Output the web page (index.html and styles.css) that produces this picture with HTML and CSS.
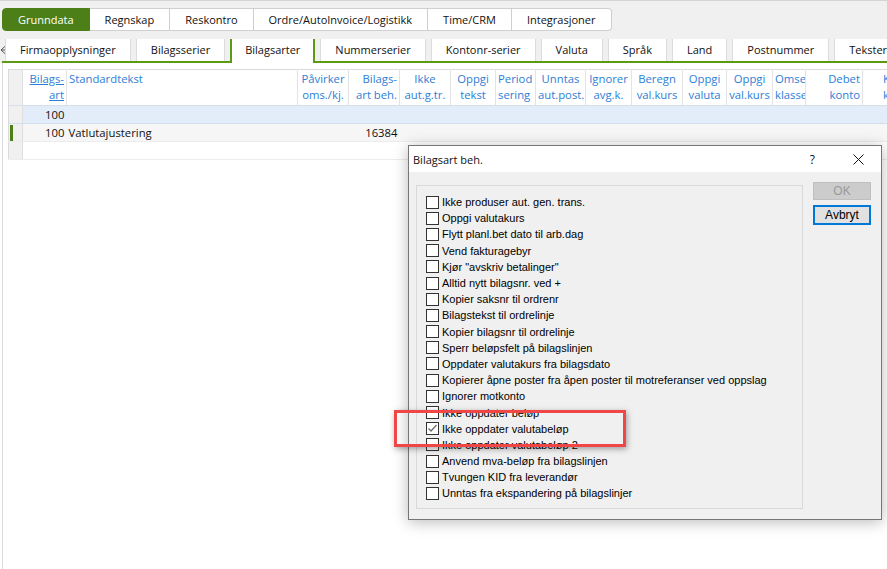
FILE: index.html
```html
<!DOCTYPE html>
<html lang="no">
<head>
    <meta charset="UTF-8">
    <title>Bilagsarter</title>
    <link rel="stylesheet" href="styles.css">
</head>
<body>
    <div class="top">
        <div class="main-tabs">
            <div class="main-tab active">Grunndata</div>
            <div class="main-tab">Regnskap</div>
            <div class="main-tab">Reskontro</div>
            <div class="main-tab">Ordre/AutoInvoice/Logistikk</div>
            <div class="main-tab">Time/CRM</div>
            <div class="main-tab">Integrasjoner</div>
        </div>
        <div class="sub-tabs">
            <svg class="nav-arrow" width="6" height="12" viewBox="0 0 6 12">
                <path d="M6 1.5 L1 6 L6 10.5 M1 6 L6 6" fill="none" stroke="#555" stroke-width="1"/>
            </svg>
            <div class="sub-tab">Firmaopplysninger</div>
            <div class="sub-tab">Bilagsserier</div>
            <div class="sub-tab active">Bilagsarter</div>
            <div class="sub-tab">Nummerserier</div>
            <div class="sub-tab">Kontonr-serier</div>
            <div class="sub-tab">Valuta</div>
            <div class="sub-tab">Språk</div>
            <div class="sub-tab">Land</div>
            <div class="sub-tab">Postnummer</div>
            <div class="sub-tab">Tekster</div>
        </div>
    </div>

    <div class="content">
        <table class="grid">
            <colgroup>
                <col style="width:14px"><col style="width:44px"><col style="width:231px">
                <col style="width:51px"><col style="width:51px"><col style="width:51px">
                <col style="width:45px"><col style="width:40px"><col style="width:50px">
                <col style="width:46px"><col style="width:51px"><col style="width:44px">
                <col style="width:46px"><col style="width:33px"><col style="width:57px">
                <col style="width:60px">
            </colgroup>
            <thead>
                <tr>
                    <th class="ind"></th>
                    <th class="right"><u>Bilags-</u><br><u>art</u></th>
                    <th class="left">Standardtekst</th>
                    <th>Påvirker<br>oms./kj.</th>
                    <th class="right">Bilags-<br>art beh.</th>
                    <th>Ikke<br>aut.g.tr.</th>
                    <th>Oppgi<br>tekst</th>
                    <th class="left">Period<br>sering</th>
                    <th>Unntas<br>aut.post.</th>
                    <th>Ignorer<br>avg.k.</th>
                    <th>Beregn<br>val.kurs</th>
                    <th>Oppgi<br>valuta</th>
                    <th>Oppgi<br>val.kurs</th>
                    <th class="left">Omsetning<br>klasse</th>
                    <th class="right">Debet<br>konto</th>
                    <th class="left">Kredit<br>konto</th>
                </tr>
            </thead>
            <tbody>
                <tr class="new-row">
                    <td class="ind"></td>
                    <td class="right">100</td>
                    <td></td><td></td><td></td><td></td><td></td><td></td>
                    <td></td><td></td><td></td><td></td><td></td><td></td><td></td><td></td>
                </tr>
                <tr class="current-row">
                    <td class="ind"><span class="marker"></span></td>
                    <td class="right">100</td>
                    <td>Vatlutajustering</td>
                    <td></td>
                    <td class="right">16384</td>
                    <td></td><td></td><td></td><td></td><td></td><td></td><td></td><td></td><td></td><td></td><td></td>
                </tr>
                <tr class="empty-row">
                    <td class="ind"></td>
                    <td></td><td></td><td></td><td></td><td></td><td></td><td></td>
                    <td></td><td></td><td></td><td></td><td></td><td></td><td></td><td></td>
                </tr>
            </tbody>
        </table>
    </div>

    <div class="dialog">
        <div class="title-bar">
            <span class="title">Bilagsart beh.</span>
            <span class="help">?</span>
            <svg class="close" width="11" height="11" viewBox="0 0 11 11">
                <path d="M0.5 0.5 L10.5 10.5 M10.5 0.5 L0.5 10.5" stroke="#111" stroke-width="1"/>
            </svg>
        </div>
        <div class="dialog-body">
            <div class="group">
                <label class="check"><span class="box"></span>Ikke produser aut. gen. trans.</label>
                <label class="check"><span class="box"></span>Oppgi valutakurs</label>
                <label class="check"><span class="box"></span>Flytt planl.bet dato til arb.dag</label>
                <label class="check"><span class="box"></span>Vend fakturagebyr</label>
                <label class="check"><span class="box"></span>Kjør "avskriv betalinger"</label>
                <label class="check"><span class="box"></span>Alltid nytt bilagsnr. ved +</label>
                <label class="check"><span class="box"></span>Kopier saksnr til ordrenr</label>
                <label class="check"><span class="box"></span>Bilagstekst til ordrelinje</label>
                <label class="check"><span class="box"></span>Kopier bilagsnr til ordrelinje</label>
                <label class="check"><span class="box"></span>Sperr beløpsfelt på bilagslinjen</label>
                <label class="check"><span class="box"></span>Oppdater valutakurs fra bilagsdato</label>
                <label class="check"><span class="box"></span>Kopierer åpne poster fra åpen poster til motreferanser ved oppslag</label>
                <label class="check"><span class="box"></span>Ignorer motkonto</label>
                <label class="check"><span class="box"></span>Ikke oppdater beløp</label>
                <label class="check"><span class="box checked">
                    <svg width="11" height="11" viewBox="0 0 11 11">
                        <path d="M1.5 5.5 L4 8 L9.5 2" fill="none" stroke="#6b6b6b" stroke-width="1.3"/>
                    </svg>
                </span>Ikke oppdater valutabeløp</label>
                <label class="check"><span class="box"></span>Ikke oppdater valutabeløp 2</label>
                <label class="check"><span class="box"></span>Anvend mva-beløp fra bilagslinjen</label>
                <label class="check"><span class="box"></span>Tvungen KID fra leverandør</label>
                <label class="check"><span class="box"></span>Unntas fra ekspandering på bilagslinjer</label>
            </div>
            <div class="buttons">
                <button type="button" class="ok-btn" disabled>OK</button>
                <button type="button" class="cancel-btn">Avbryt</button>
            </div>
        </div>
    </div>

    <div class="highlight"></div>
</body>
</html>
```

FILE: styles.css
```css
body {
    margin: 0;
    background: #fff;
    font-family: "Open Sans", "Noto Sans", sans-serif;
    font-size: 11.3px;
    color: #111;
    overflow: hidden;
    position: relative;
    height: 569px;
}
.top {
    background: #f0f0f0;
    border-top: 1px solid #d4d4d4;
    padding-top: 7px;
}
.main-tabs {
    display: flex;
    padding-left: 2px;
    font-size: 11px;
}
.main-tab {
    height: 21px;
    line-height: 21px;
    padding: 0 15px;
    background: #fff;
    border: 1px solid #cfcfcf;
    border-left: none;
    white-space: nowrap;
}
.main-tab:first-child {
    border-left: 1px solid #cfcfcf;
    border-radius: 4px 0 0 4px;
}
.main-tab:last-child {
    border-radius: 0 4px 4px 0;
}
.main-tab.active {
    background: #4d7f19;
    border-color: #4d7f19;
    color: #fff;
}
.sub-tabs {
    display: flex;
    align-items: flex-end;
    gap: 5px;
    margin-top: 8px;
    height: 24px;
    overflow: hidden;
    position: relative;
    font-size: 11px;
}
.sub-tabs::after {
    content: "";
    position: absolute;
    left: 2px;
    right: 0;
    bottom: 0;
    height: 2px;
    background: #5b9a12;
}
.nav-arrow {
    flex-shrink: 0;
    align-self: flex-start;
    margin-top: 5px;
    margin-right: -6px;
}
.sub-tab {
    flex-shrink: 0;
    height: 22px;
    line-height: 22px;
    padding: 0 14px;
    background: #fff;
    border: 1px solid #dcdcdc;
    border-bottom: none;
    white-space: nowrap;
    margin-bottom: 2px;
}
.sub-tab.active {
    height: 24px;
    line-height: 22px;
    margin-bottom: 0;
    border: 2px solid #5b9a12;
    border-bottom: none;
    padding: 0 13px;
    position: relative;
    z-index: 1;
}
.content {
    margin-left: 2px;
    border-left: 1px solid #dcdcdc;
    padding: 6px 0 0 5px;
    height: 500px;
    overflow: hidden;
}
.grid {
    border-collapse: collapse;
    table-layout: fixed;
    width: 914px;
    border: 1px solid #dadada;
}
.grid th {
    height: 34px;
    padding: 1px 2px 0;
    font-weight: normal;
    color: #2d7ed6;
    line-height: 16px;
    vertical-align: top;
    text-align: center;
    white-space: nowrap;
    overflow: hidden;
    border-right: 1px solid #e3e3e3;
    border-bottom: 1px solid #d6dfe9;
    background: #fff;
}
.grid th.left {
    text-align: left;
}
.grid th.right {
    text-align: right;
}
.grid th:last-child {
    padding-left: 20px;
}
.grid td {
    height: 17px;
    padding: 0 2px;
    white-space: nowrap;
    overflow: hidden;
    border-bottom: 1px solid #ececec;
}
.grid td.right {
    text-align: right;
}
.grid .ind {
    background: #f0f0f0;
    border-right: 1px solid #dedede;
    padding: 0;
    position: relative;
}
.new-row td {
    background: #e3edf9;
    border-bottom: 1px solid #d4dfec;
}
.current-row td {
    background: #f6f6f6;
}
.marker {
    position: absolute;
    left: 1px;
    top: 1px;
    width: 3px;
    height: 16px;
    background: #4d7f19;
}
.dialog {
    position: absolute;
    left: 408px;
    top: 145px;
    width: 472px;
    height: 373px;
    border: 1px solid #767676;
    background: #f0f0f0;
    box-shadow: 0 2px 14px rgba(0, 0, 0, 0.28);
    display: flex;
    flex-direction: column;
    font-family: "Liberation Sans", Arial, sans-serif;
    font-size: 11px;
}
.title-bar {
    height: 26px;
    background: #fff;
    display: flex;
    align-items: center;
    padding-left: 4px;
    font-family: "Open Sans", sans-serif;
    font-size: 11px;
}
.title {
    flex: 1;
}
.help {
    margin-right: 38px;
    font-size: 12px;
}
.close {
    margin-right: 17px;
}
.dialog-body {
    flex: 1;
    display: flex;
    gap: 10px;
    padding: 10px 10px 10px 7px;
}
.group {
    flex: 1;
    margin-top: 3px;
    border: 1px solid #d9d9d9;
    padding: 8px 0 0 9px;
}
.check {
    display: flex;
    align-items: center;
    height: 16.2px;
    white-space: nowrap;
    color: #000;
}
.box {
    width: 11px;
    height: 11px;
    border: 1px solid #333;
    background: #fff;
    margin-right: 3px;
    flex-shrink: 0;
    display: flex;
}
.buttons {
    width: 58px;
    display: flex;
    flex-direction: column;
    gap: 5px;
}
button {
    font-family: "Liberation Sans", Arial, sans-serif;
    font-size: 12px;
    padding: 0;
    color: #000;
}
.ok-btn {
    height: 18px;
    background: #cccccc;
    border: 1px solid #bfbfbf;
    color: #9a9a9a;
}
.cancel-btn {
    height: 20px;
    background: #e1e1e1;
    border: 2px solid #0078d7;
}
.highlight {
    position: absolute;
    left: 394px;
    top: 410px;
    width: 226px;
    height: 31px;
    border: 3px solid #f04646;
    box-shadow: 1px 2px 6px rgba(0, 0, 0, 0.35);
}
```
